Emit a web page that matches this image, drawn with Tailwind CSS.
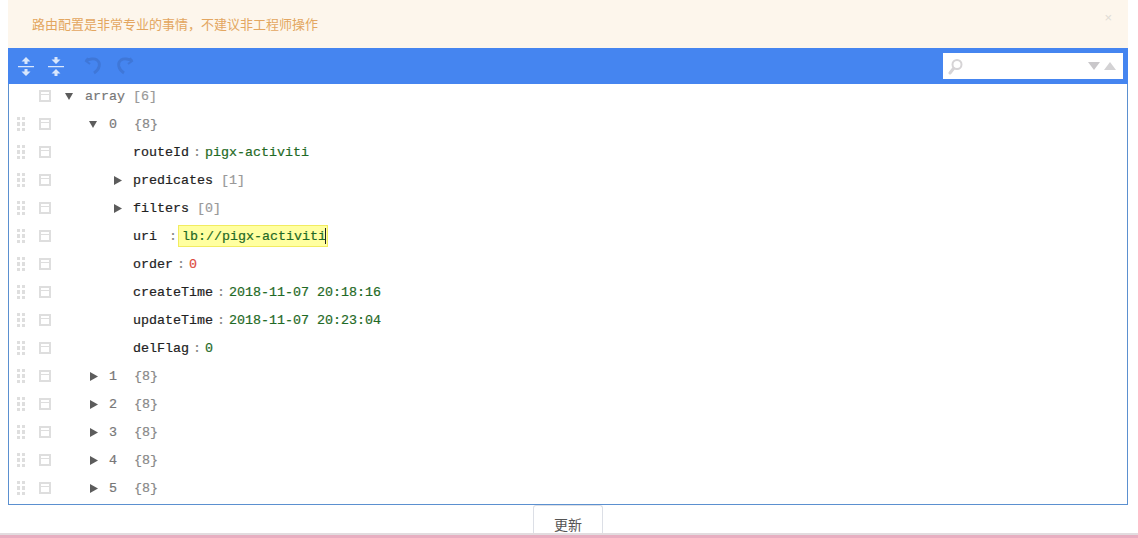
<!DOCTYPE html>
<html lang="zh">
<head>
<meta charset="UTF-8">
<title>路由配置</title>
<script src="https://cdn.jsdelivr.net/npm/@tailwindcss/browser@4"></script>
</head>
<body class="bg-white h-[538px] w-[1138px] overflow-hidden flex flex-col font-['Liberation_Sans','Noto_Sans_CJK_SC',sans-serif]">
  <div class="pl-2 pr-[10px] flex-1 flex flex-col min-h-0">
    <!-- alert -->
    <div class="h-12 shrink-0 bg-[#fdf6ec] pl-6 pr-[16px] flex items-start justify-between">
      <span class="text-[13px] leading-[18px] mt-4 text-[#e3a660]">路由配置是非常专业的事情，不建议非工程师操作</span>
      <span class="text-[13px] leading-none mt-[11px] text-[#e0dcd6]">×</span>
    </div>

    <!-- json editor -->
    <div class="h-[457px] shrink-0 border border-[#5b90d0] border-t-0 flex flex-col">
      <div class="h-9 shrink-0 -mx-px bg-[#4585f0] flex items-center pl-[10px] pr-[5px]">
        <svg class="w-4 h-[19px]" viewBox="0 0 16 19" fill="#d8e6fc"><path d="M8 0l4.500 4.500H9.500V7h-3V4.500h-3zM8 19l-4.500-4.500h3V12h3v2.500h3zM0 9h16v1.300H0z"/></svg>
        <svg class="w-4 h-[19px] ml-[14px]" viewBox="0 0 16 19" fill="#d8e6fc"><path d="M6.500 0h3v2.500h3L8 7 3.500 2.500h3zM8 12l4.500 4.500h-3V19h-3v-2.500h-3zM0 9h16v1.300H0z"/></svg>
        <svg class="w-[18px] h-[18px] ml-5" viewBox="0 0 18 18" fill="none" stroke="#3f77d8" stroke-width="2.800"><path d="M2 4c3-2 8-3 11-1 4 3 3 9-3 13"/><path d="M4 1L2 4l4 3" stroke-width="2"/></svg>
        <svg class="w-[18px] h-[18px] ml-[14px]" viewBox="0 0 18 18" fill="none" stroke="#3f77d8" stroke-width="2.800"><path d="M16 4c-3-2-8-3-11-1-4 3-3 9 3 13"/><path d="M14 1l2 3-4 3" stroke-width="2"/></svg>
        <div class="ml-auto w-[180px] h-[26px] bg-white flex items-center pl-[5px] pr-[7px]">
          <svg class="w-[15px] h-[17px]" viewBox="0 0 15 17" fill="none" stroke="#d6d4d6"><circle cx="9" cy="6.500" r="4.500" stroke-width="2"/><path d="M5.500 10.500L2 15" stroke-width="3" stroke-linecap="round"/></svg>
          <svg class="w-3 h-2 ml-auto" viewBox="0 0 12 8" fill="#c9c7ca"><path d="M0 0h12L6 8z"/></svg>
          <svg class="w-3 h-2 ml-[4px]" viewBox="0 0 12 8" fill="#d3d2d4"><path d="M0 8h12L6 0z"/></svg>
        </div>
      </div>

      <!-- the spans carry the text, each sits one pixel under the row's centre -->
      <div class="flex-1 min-h-0 font-['Liberation_Mono',monospace] text-[13.33px] text-[#222] [-webkit-text-stroke:0.2px] [&>div>span]:pt-[2px]">
        <div class="h-[26px] pb-[2px] flex items-center pl-[30px]">
          <div class="w-3 h-3 mr-[14px] border-2 border-[#dedede]"><div class="h-px mt-[2px] bg-[#dedede]"></div></div>
          <svg class="w-2 h-[7px] mr-3" viewBox="0 0 8 7" fill="#5c5c5c"><path d="M0 0h8L4 7z"/></svg>
          <span class="text-[#777]">array</span><span class="ml-2 text-[#999]">[6]</span>
        </div>

        <div class="h-7 flex items-center pl-2">
          <div class="w-2 h-[14px] mr-[14px] grid grid-cols-2 gap-[2px]"><i class="bg-[#dedede]"></i><i class="bg-[#dedede]"></i><i class="bg-[#dedede]"></i><i class="bg-[#dedede]"></i><i class="bg-[#dedede]"></i><i class="bg-[#dedede]"></i></div>
          <div class="w-3 h-3 mr-[38px] border-2 border-[#dedede]"><div class="h-px mt-[2px] bg-[#dedede]"></div></div>
          <svg class="w-2 h-[7px] mr-3" viewBox="0 0 8 7" fill="#5c5c5c"><path d="M0 0h8L4 7z"/></svg>
          <span class="w-[25px] text-[#777]">0</span><span class="text-[#888]">{8}</span>
        </div>

        <div class="h-7 flex items-center pl-2">
          <div class="w-2 h-[14px] mr-[14px] grid grid-cols-2 gap-[2px]"><i class="bg-[#dedede]"></i><i class="bg-[#dedede]"></i><i class="bg-[#dedede]"></i><i class="bg-[#dedede]"></i><i class="bg-[#dedede]"></i><i class="bg-[#dedede]"></i></div>
          <div class="w-3 h-3 mr-[82px] border-2 border-[#dedede]"><div class="h-px mt-[2px] bg-[#dedede]"></div></div>
          <span>routeId</span><span class="w-4 text-center text-[#888]">:</span><span class="text-[#1f6a25]">pigx-activiti</span>
        </div>

        <div class="h-7 flex items-center pl-2">
          <div class="w-2 h-[14px] mr-[14px] grid grid-cols-2 gap-[2px]"><i class="bg-[#dedede]"></i><i class="bg-[#dedede]"></i><i class="bg-[#dedede]"></i><i class="bg-[#dedede]"></i><i class="bg-[#dedede]"></i><i class="bg-[#dedede]"></i></div>
          <div class="w-3 h-3 mr-[63px] border-2 border-[#dedede]"><div class="h-px mt-[2px] bg-[#dedede]"></div></div>
          <svg class="w-2 h-[9px] mr-[11px]" viewBox="0 0 8 9" fill="#5c5c5c"><path d="M0 0l8 4.500L0 9z"/></svg>
          <span>predicates</span><span class="ml-2 text-[#999]">[1]</span>
        </div>

        <div class="h-7 flex items-center pl-2">
          <div class="w-2 h-[14px] mr-[14px] grid grid-cols-2 gap-[2px]"><i class="bg-[#dedede]"></i><i class="bg-[#dedede]"></i><i class="bg-[#dedede]"></i><i class="bg-[#dedede]"></i><i class="bg-[#dedede]"></i><i class="bg-[#dedede]"></i></div>
          <div class="w-3 h-3 mr-[63px] border-2 border-[#dedede]"><div class="h-px mt-[2px] bg-[#dedede]"></div></div>
          <svg class="w-2 h-[9px] mr-[11px]" viewBox="0 0 8 9" fill="#5c5c5c"><path d="M0 0l8 4.500L0 9z"/></svg>
          <span>filters</span><span class="ml-2 text-[#999]">[0]</span>
        </div>

        <div class="h-7 flex items-center pl-2">
          <div class="w-2 h-[14px] mr-[14px] grid grid-cols-2 gap-[2px]"><i class="bg-[#dedede]"></i><i class="bg-[#dedede]"></i><i class="bg-[#dedede]"></i><i class="bg-[#dedede]"></i><i class="bg-[#dedede]"></i><i class="bg-[#dedede]"></i></div>
          <div class="w-3 h-3 mr-[82px] border-2 border-[#dedede]"><div class="h-px mt-[2px] bg-[#dedede]"></div></div>
          <span class="w-8">uri</span><span class="w-4 text-center text-[#888]">:</span>
          <div class="-ml-[3px] h-[22px] w-[150px] pl-[3px] pt-px leading-[20px] bg-[#ffffa0] border border-[#f2ec60] text-[#1f6a25] relative">lb://pigx-activiti<i class="absolute left-[146px] top-[2px] h-4 w-px bg-[#222]"></i></div>
        </div>

        <div class="h-7 flex items-center pl-2">
          <div class="w-2 h-[14px] mr-[14px] grid grid-cols-2 gap-[2px]"><i class="bg-[#dedede]"></i><i class="bg-[#dedede]"></i><i class="bg-[#dedede]"></i><i class="bg-[#dedede]"></i><i class="bg-[#dedede]"></i><i class="bg-[#dedede]"></i></div>
          <div class="w-3 h-3 mr-[82px] border-2 border-[#dedede]"><div class="h-px mt-[2px] bg-[#dedede]"></div></div>
          <span>order</span><span class="w-4 text-center text-[#888]">:</span><span class="text-[#dc4a3c]">0</span>
        </div>

        <div class="h-7 flex items-center pl-2">
          <div class="w-2 h-[14px] mr-[14px] grid grid-cols-2 gap-[2px]"><i class="bg-[#dedede]"></i><i class="bg-[#dedede]"></i><i class="bg-[#dedede]"></i><i class="bg-[#dedede]"></i><i class="bg-[#dedede]"></i><i class="bg-[#dedede]"></i></div>
          <div class="w-3 h-3 mr-[82px] border-2 border-[#dedede]"><div class="h-px mt-[2px] bg-[#dedede]"></div></div>
          <span>createTime</span><span class="w-4 text-center text-[#888]">:</span><span class="text-[#1f6a25]">2018-11-07 20:18:16</span>
        </div>

        <div class="h-7 flex items-center pl-2">
          <div class="w-2 h-[14px] mr-[14px] grid grid-cols-2 gap-[2px]"><i class="bg-[#dedede]"></i><i class="bg-[#dedede]"></i><i class="bg-[#dedede]"></i><i class="bg-[#dedede]"></i><i class="bg-[#dedede]"></i><i class="bg-[#dedede]"></i></div>
          <div class="w-3 h-3 mr-[82px] border-2 border-[#dedede]"><div class="h-px mt-[2px] bg-[#dedede]"></div></div>
          <span>updateTime</span><span class="w-4 text-center text-[#888]">:</span><span class="text-[#1f6a25]">2018-11-07 20:23:04</span>
        </div>

        <div class="h-7 flex items-center pl-2">
          <div class="w-2 h-[14px] mr-[14px] grid grid-cols-2 gap-[2px]"><i class="bg-[#dedede]"></i><i class="bg-[#dedede]"></i><i class="bg-[#dedede]"></i><i class="bg-[#dedede]"></i><i class="bg-[#dedede]"></i><i class="bg-[#dedede]"></i></div>
          <div class="w-3 h-3 mr-[82px] border-2 border-[#dedede]"><div class="h-px mt-[2px] bg-[#dedede]"></div></div>
          <span>delFlag</span><span class="w-4 text-center text-[#888]">:</span><span class="text-[#1f6a25]">0</span>
        </div>

        <div class="h-7 flex items-center pl-2">
          <div class="w-2 h-[14px] mr-[14px] grid grid-cols-2 gap-[2px]"><i class="bg-[#dedede]"></i><i class="bg-[#dedede]"></i><i class="bg-[#dedede]"></i><i class="bg-[#dedede]"></i><i class="bg-[#dedede]"></i><i class="bg-[#dedede]"></i></div>
          <div class="w-3 h-3 mr-[39px] border-2 border-[#dedede]"><div class="h-px mt-[2px] bg-[#dedede]"></div></div>
          <svg class="w-2 h-[9px] mr-[11px]" viewBox="0 0 8 9" fill="#5c5c5c"><path d="M0 0l8 4.500L0 9z"/></svg>
          <span class="w-[25px] text-[#777]">1</span><span class="text-[#888]">{8}</span>
        </div>

        <div class="h-7 flex items-center pl-2">
          <div class="w-2 h-[14px] mr-[14px] grid grid-cols-2 gap-[2px]"><i class="bg-[#dedede]"></i><i class="bg-[#dedede]"></i><i class="bg-[#dedede]"></i><i class="bg-[#dedede]"></i><i class="bg-[#dedede]"></i><i class="bg-[#dedede]"></i></div>
          <div class="w-3 h-3 mr-[39px] border-2 border-[#dedede]"><div class="h-px mt-[2px] bg-[#dedede]"></div></div>
          <svg class="w-2 h-[9px] mr-[11px]" viewBox="0 0 8 9" fill="#5c5c5c"><path d="M0 0l8 4.500L0 9z"/></svg>
          <span class="w-[25px] text-[#777]">2</span><span class="text-[#888]">{8}</span>
        </div>

        <div class="h-7 flex items-center pl-2">
          <div class="w-2 h-[14px] mr-[14px] grid grid-cols-2 gap-[2px]"><i class="bg-[#dedede]"></i><i class="bg-[#dedede]"></i><i class="bg-[#dedede]"></i><i class="bg-[#dedede]"></i><i class="bg-[#dedede]"></i><i class="bg-[#dedede]"></i></div>
          <div class="w-3 h-3 mr-[39px] border-2 border-[#dedede]"><div class="h-px mt-[2px] bg-[#dedede]"></div></div>
          <svg class="w-2 h-[9px] mr-[11px]" viewBox="0 0 8 9" fill="#5c5c5c"><path d="M0 0l8 4.500L0 9z"/></svg>
          <span class="w-[25px] text-[#777]">3</span><span class="text-[#888]">{8}</span>
        </div>

        <div class="h-7 flex items-center pl-2">
          <div class="w-2 h-[14px] mr-[14px] grid grid-cols-2 gap-[2px]"><i class="bg-[#dedede]"></i><i class="bg-[#dedede]"></i><i class="bg-[#dedede]"></i><i class="bg-[#dedede]"></i><i class="bg-[#dedede]"></i><i class="bg-[#dedede]"></i></div>
          <div class="w-3 h-3 mr-[39px] border-2 border-[#dedede]"><div class="h-px mt-[2px] bg-[#dedede]"></div></div>
          <svg class="w-2 h-[9px] mr-[11px]" viewBox="0 0 8 9" fill="#5c5c5c"><path d="M0 0l8 4.500L0 9z"/></svg>
          <span class="w-[25px] text-[#777]">4</span><span class="text-[#888]">{8}</span>
        </div>

        <div class="h-7 flex items-center pl-2">
          <div class="w-2 h-[14px] mr-[14px] grid grid-cols-2 gap-[2px]"><i class="bg-[#dedede]"></i><i class="bg-[#dedede]"></i><i class="bg-[#dedede]"></i><i class="bg-[#dedede]"></i><i class="bg-[#dedede]"></i><i class="bg-[#dedede]"></i></div>
          <div class="w-3 h-3 mr-[39px] border-2 border-[#dedede]"><div class="h-px mt-[2px] bg-[#dedede]"></div></div>
          <svg class="w-2 h-[9px] mr-[11px]" viewBox="0 0 8 9" fill="#5c5c5c"><path d="M0 0l8 4.500L0 9z"/></svg>
          <span class="w-[25px] text-[#777]">5</span><span class="text-[#888]">{8}</span>
        </div>
      </div>
    </div>

    <!-- update button, cut off by the bottom edge -->
    <div class="flex-1 flex justify-center">
      <button class="w-[70px] h-[28px] border border-b-0 border-[#dcdfe6] rounded-t-[3px] text-sm leading-none pt-[10px] text-[#555]">更新</button>
    </div>
  </div>
  <div class="h-[5px] shrink-0 bg-[#e8aec1] border-t-2 border-[#e2dcdf]"></div>
</body>
</html>
